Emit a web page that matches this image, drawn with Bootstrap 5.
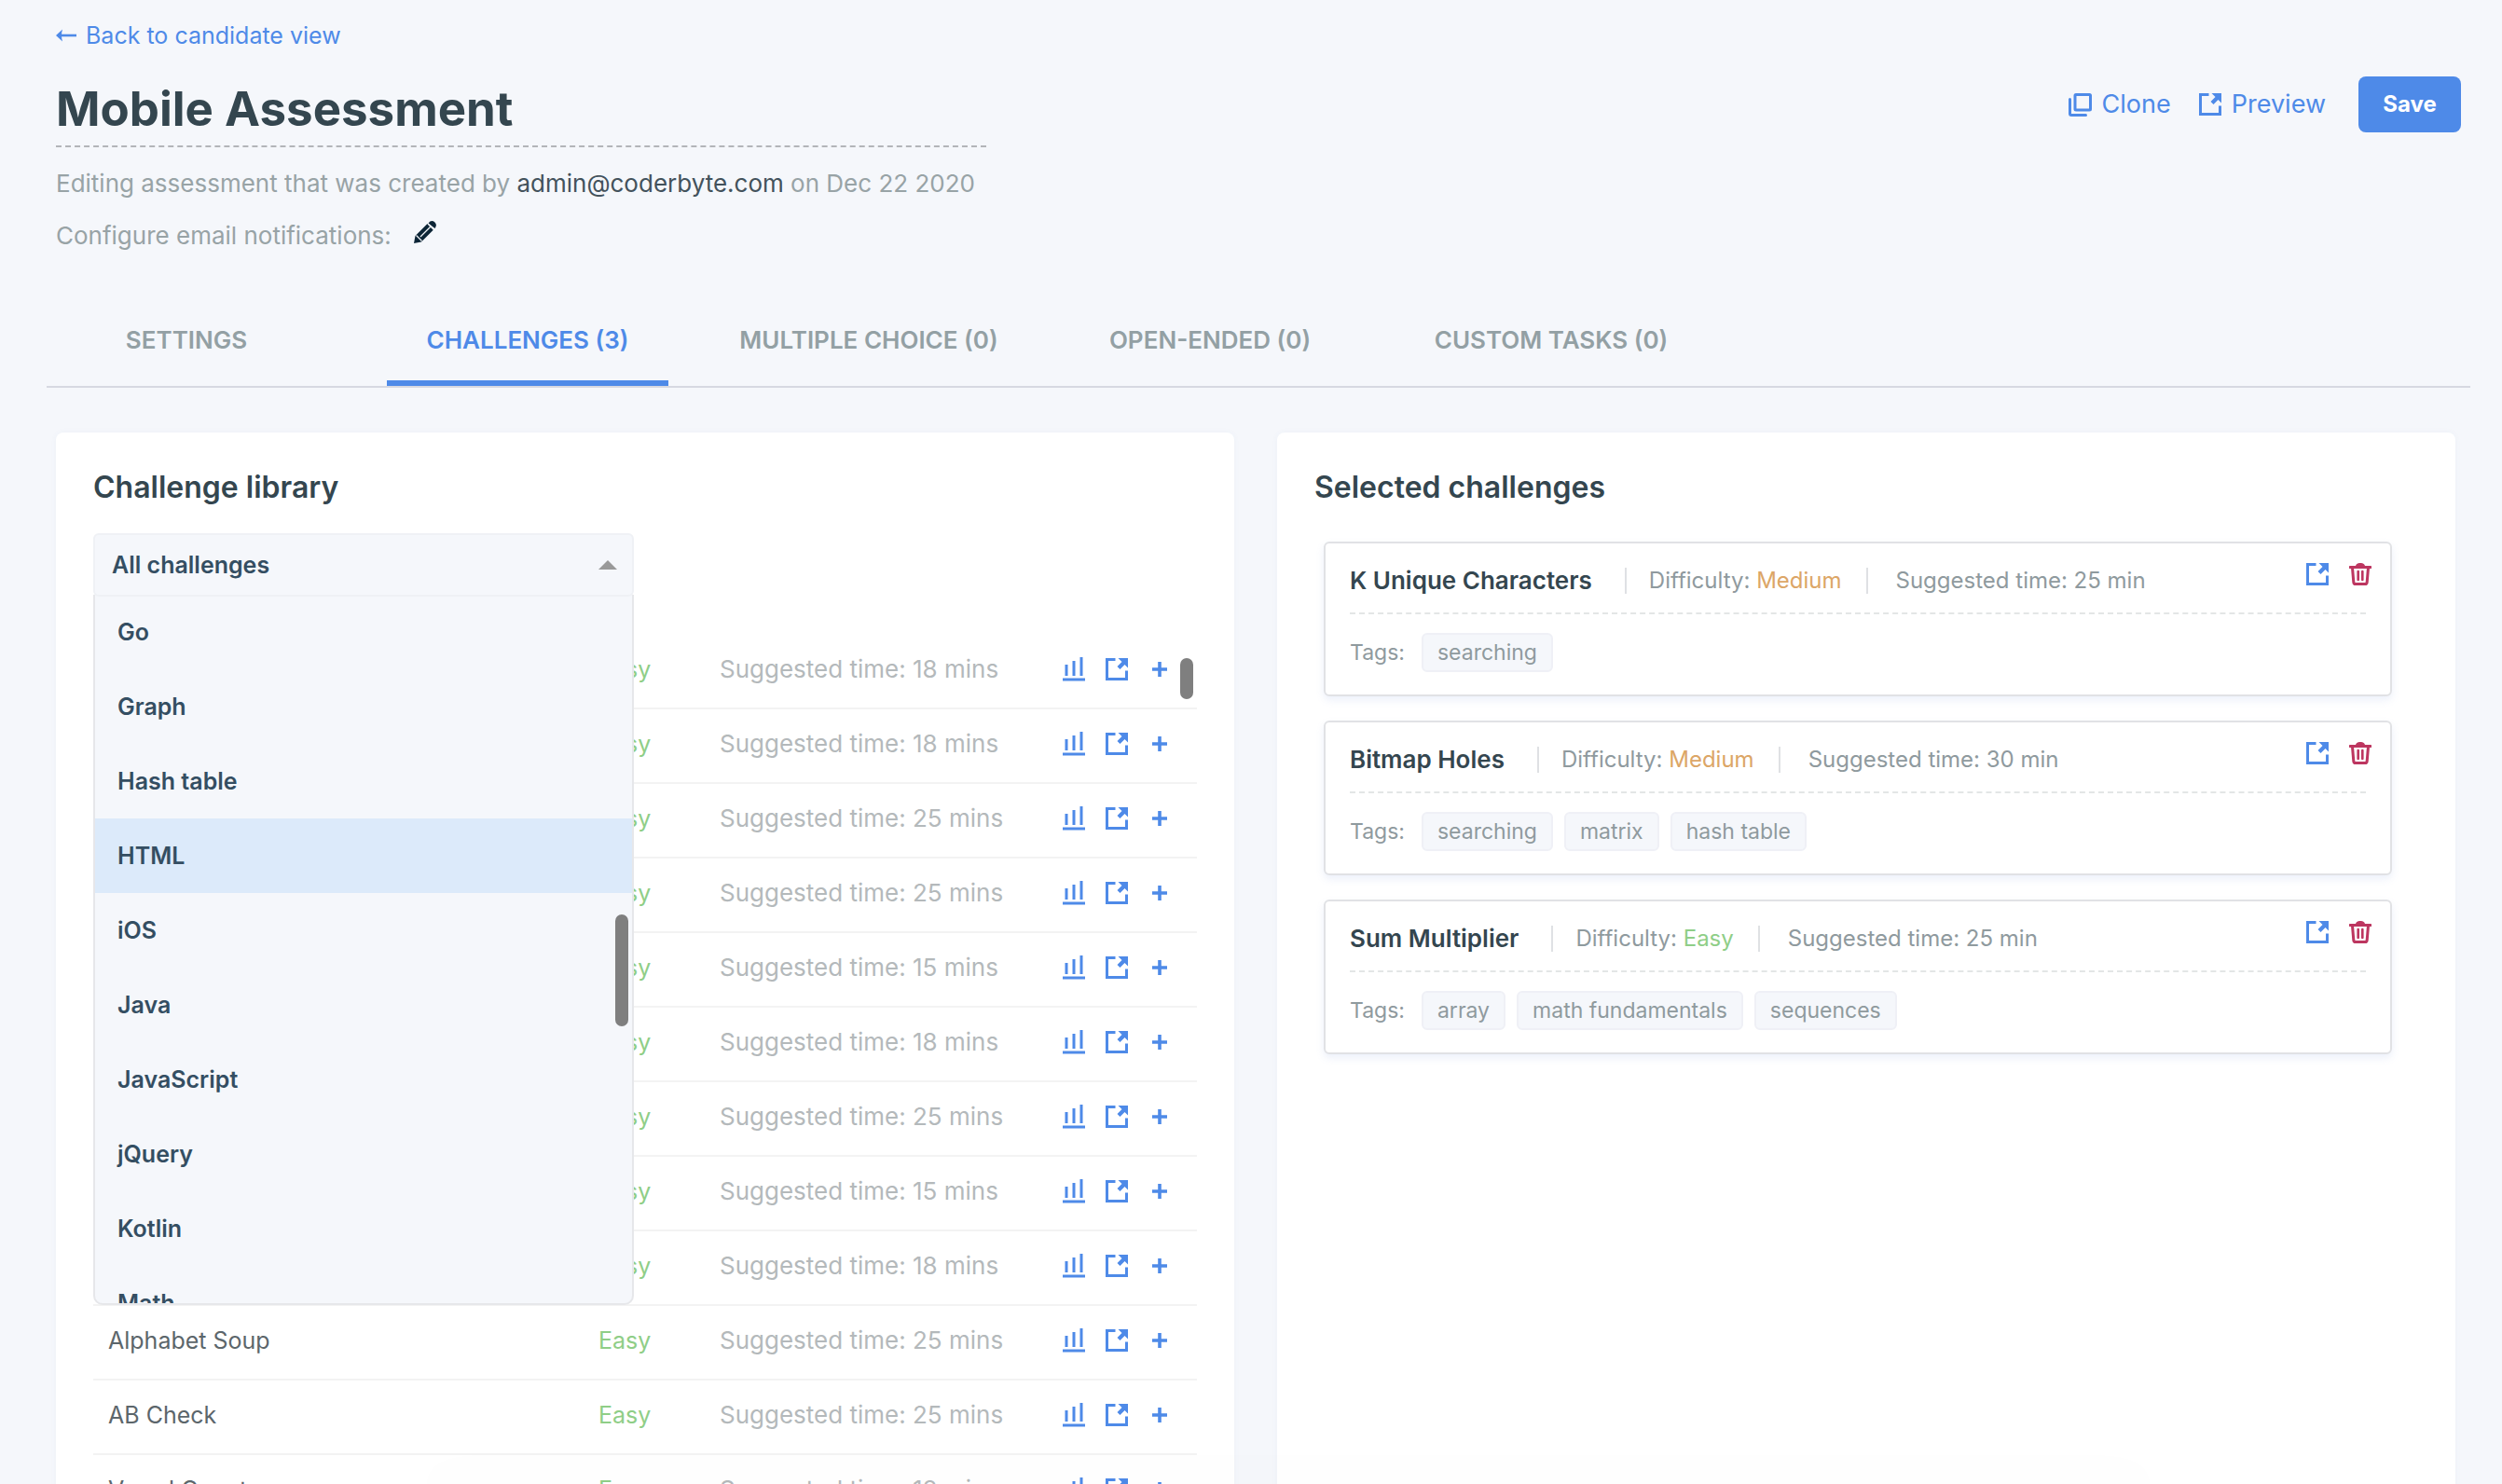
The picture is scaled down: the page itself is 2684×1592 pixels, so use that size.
<!DOCTYPE html>
<html lang="en">
<head>
<meta charset="utf-8">
<meta name="viewport" content="width=device-width, initial-scale=1">
<title>Mobile Assessment</title>
<link href="https://cdn.jsdelivr.net/npm/bootstrap@5.3.0/dist/css/bootstrap.min.css" rel="stylesheet">
<style>
:root{--blue:#4e8ae8;--ink:#34464f;--muted:#98a3a6}
body{font-family:Inter,"Liberation Sans",sans-serif;font-size:26px;line-height:38px;background:#f5f7fb;color:var(--muted);height:100vh;overflow:hidden}
a{color:var(--blue);text-decoration:none}
svg{display:block;flex:none}
.icon-btn{border:0;background:none;padding:0;color:var(--blue)}
.page-head{padding:19px 44px 0 60px}
.back-link{font-size:25px;gap:10px}
.head-row{margin-top:23px}
.title-input{width:998px;max-width:100%;height:78px;border:0;border-bottom:2px dashed #b3b5b9;background:none;padding:0 0 4px;font-size:51px;font-weight:700;color:var(--ink);outline:0}
.meta-line{margin:20px 0 18px}
.meta-line strong{font-weight:400;color:#43525c}
.head-actions{font-size:27px;gap:30px;margin-top:2px}
.head-actions a{gap:11px}
.save-btn{width:110px;height:60px;border-radius:8px;background:var(--blue);color:#fff;font-size:24px;font-weight:700;margin-left:5px;padding:0}
.tab-bar{margin:50px 34px 0 50px;border-bottom:2px solid #d6d8e1}
.tab-bar .nav-item{width:366px}
.tab-bar .nav-item:first-child{width:300px;margin-right:33px}
.tab-bar .nav-link{min-width:302px;height:92px;border-bottom:6px solid transparent;border-radius:0;padding:0;font-weight:600;line-height:86px;color:#93a0a4;text-align:center;white-space:nowrap}
.tab-bar .nav-link.active{color:var(--blue);border-color:var(--blue)}
.panels{padding:48px 50px 0 60px;gap:46px}
.panel{flex:1 1 0;min-width:0;background:#fff;border-radius:8px;padding:39px 40px 0;box-shadow:0 0 6px rgba(80,110,170,.05)}
.panel h2{font-size:32px;line-height:40px;font-weight:600;color:var(--ink);margin:0 0 29px}
.picker{width:580px;height:68px;margin-bottom:40px}
.picker-btn{position:relative;z-index:1001;width:100%;height:68px;border:2px solid #eff1f5;border-radius:6px;background:#f5f7fb;color:#344e62;font-size:25px;font-weight:600;padding:0 16px 0 18px}
.picker-menu{top:66px;width:100%;height:762px;margin:0;padding:0;overflow:hidden;background:#f5f7fb;border:2px solid #e6e7ea;border-top:0;border-radius:0 0 10px 10px}
.picker-menu .dropdown-item{height:80px;padding:0 24px;font-size:25px;font-weight:600;color:#344e62}
.picker-menu .dropdown-item.active{background:#dceafa}
.thumb{position:absolute;width:14px;border-radius:7px;background:#7f7f7f}
.picker-menu .thumb{right:4px;top:343px;height:120px}
.library .thumb{right:4px;top:26px;height:44px}
.library table{table-layout:fixed;width:100%}
.library td{height:80px;padding:0 0 4px;border-bottom:2px solid #f3f3f3;vertical-align:middle;font-size:25px;white-space:nowrap}
.library td:first-child{padding-left:16px;color:#5c666b}
.library td:nth-child(3){font-size:26px;color:#b4b9bb}
.library td.easy,.easy{color:#8fce87}
.medium{color:#dca667}
.row-icons{gap:22px}
.row-icons .plus{margin-left:4px}
.picked{margin:38px 28px 0 10px;gap:26px}
.pick{border:2px solid #e1e2e5;border-radius:6px;background:#fff;padding:0 26px 24px;box-shadow:0 4px 8px rgba(120,150,220,.14)}
.pick-top{height:76px;padding-top:6px;border-bottom:2px dashed #e3e6e6;font-size:24px;color:#8f9a9e}
.pick h3{font-size:26px;font-weight:600;color:var(--ink);margin:0 35px 0 0}
.pick-diff{border:solid #dfe1e4;border-width:0 2px;padding:0 26px 0 24px;line-height:28px}
.pick-time{margin-left:30px}
.pick-icons{gap:22px;margin:0 -6px 14px auto}
.trash{color:#bd3660}
.pick-tags{gap:12px;margin-top:20px;font-size:23px;color:#8f9a9e}
.pick-tags b{font-weight:400;margin-right:6px}
.tag{height:42px;line-height:38px;border:2px solid #eff0f6;border-radius:6px;background:#f5f7fb;padding:0 15px}
.foot-shade{position:fixed;bottom:0;left:17%;right:14%;height:0;box-shadow:0 0 60px 6px rgba(0,0,0,.04)}
</style>
</head>
<body class="d-flex flex-column">
<svg width="0" height="0" class="position-absolute" aria-hidden="true">
  <symbol id="open" viewBox="0 0 24 24"><path d="M10.500 1.500H1.500v21h21V13.500" fill="none" stroke="currentColor" stroke-width="3"/><path d="M13.500 0H24v10.500l-3.500-3.500-5 5-3-3 5-5z" fill="currentColor"/></symbol>
  <symbol id="chart" viewBox="0 0 24 26"><path d="M4 8v12M12 4v16M20 0v20M0 24h24" fill="none" stroke="currentColor" stroke-width="3"/></symbol>
  <symbol id="plus" viewBox="0 0 16 16"><path d="M8 0v16M0 8h16" stroke="currentColor" stroke-width="3.600"/></symbol>
  <symbol id="bin" viewBox="0 0 24 24"><path d="M1 4.500h22" stroke="currentColor" stroke-width="3" stroke-linecap="round"/><path d="M7 4c0-3 2-4 5-4s5 1 5 4z" fill="currentColor"/><path d="M3.500 5l1.300 15.500q.2 2 2 2h10.400q1.800 0 2-2L20.500 5" fill="none" stroke="currentColor" stroke-width="3"/><path d="M9.700 9v9M14.300 9v9" stroke="currentColor" stroke-width="2.600" stroke-linecap="round"/></symbol>
</svg>

<header class="page-head">
  <div class="d-flex"><a href="#" class="back-link d-flex align-items-center"><svg width="22" height="14" viewBox="0 0 22 14" aria-hidden="true"><path d="M4 7h18" stroke="currentColor" stroke-width="2.600"/><path d="M0 7l7-6.500q-2 6.500 0 13z" fill="currentColor"/></svg>Back to candidate view</a></div>
  <div class="head-row d-flex justify-content-between align-items-start">
    <input class="title-input" type="text" value="Mobile Assessment" aria-label="Assessment title">
    <div class="head-actions d-flex align-items-center">
      <a href="#" class="d-flex align-items-center"><svg width="25" height="25" viewBox="0 0 25 25" fill="none" stroke="currentColor" stroke-width="3" aria-hidden="true"><rect x="7" y="1.500" width="16.500" height="16.500" rx="1"/><path d="M1.500 6.500V22q0 1.500 1.500 1.500h15.500" stroke-linecap="round"/></svg>Clone</a>
      <a href="#" class="d-flex align-items-center"><svg width="24" height="24" aria-hidden="true"><use href="#open"/></svg>Preview</a>
      <button type="button" class="btn save-btn">Save</button>
    </div>
  </div>
  <p class="meta-line">Editing assessment that was created by <strong>admin@coderbyte.com</strong> on Dec 22 2020</p>
  <div class="d-flex align-items-center">Configure email notifications:
    <button type="button" class="icon-btn ms-4 mb-2" aria-label="Edit email notifications"><svg width="24" height="24" viewBox="0 0 24 24"><path d="M0 24l1.500-8L14.500 3l6.500 6.500L8 22.500z" fill="#0c2536"/><path d="M15.500 2.500q3-4 6.500-1.500 3.500 3 .5 7z" fill="#0c2536"/><path d="M2.500 15.500l6 6M15 3l6.500 6.500M7 17L17.500 6.500" stroke="#f5f7fb" stroke-width="1.300"/></svg></button>
  </div>
</header>

<nav class="tab-bar">
  <ul class="nav flex-nowrap">
    <li class="nav-item d-flex justify-content-center"><a class="nav-link" href="#">SETTINGS</a></li>
    <li class="nav-item d-flex justify-content-center"><a class="nav-link active" aria-current="page" href="#">CHALLENGES (3)</a></li>
    <li class="nav-item d-flex justify-content-center"><a class="nav-link" href="#">MULTIPLE CHOICE (0)</a></li>
    <li class="nav-item d-flex justify-content-center"><a class="nav-link" href="#">OPEN-ENDED (0)</a></li>
    <li class="nav-item d-flex justify-content-center"><a class="nav-link" href="#">CUSTOM TASKS (0)</a></li>
  </ul>
</nav>

<main class="panels d-flex flex-grow-1">
  <section class="panel">
    <h2>Challenge library</h2>
    <div class="picker dropdown">
      <button type="button" class="picker-btn d-flex align-items-center justify-content-between" aria-expanded="true">All challenges<svg width="20" height="10" viewBox="0 0 20 10" aria-hidden="true"><path d="M0 10L10 0l10 10z" fill="#999"/></svg></button>
      <ul class="picker-menu dropdown-menu show">
        <li><button type="button" class="dropdown-item">Go</button></li>
        <li><button type="button" class="dropdown-item">Graph</button></li>
        <li><button type="button" class="dropdown-item">Hash table</button></li>
        <li><button type="button" class="dropdown-item active">HTML</button></li>
        <li><button type="button" class="dropdown-item">iOS</button></li>
        <li><button type="button" class="dropdown-item">Java</button></li>
        <li><button type="button" class="dropdown-item">JavaScript</button></li>
        <li><button type="button" class="dropdown-item">jQuery</button></li>
        <li><button type="button" class="dropdown-item">Kotlin</button></li>
        <li><button type="button" class="dropdown-item">Math</button></li>
        <li class="thumb" aria-hidden="true"></li>
      </ul>
    </div>
    <div class="library position-relative">
      <table>
        <colgroup><col><col style="width:130px"><col style="width:368px"><col style="width:144px"></colgroup>
        <tbody id="library-rows"></tbody>
      </table>
      <div class="thumb"></div>
    </div>
  </section>

  <section class="panel">
    <h2>Selected challenges</h2>
    <div class="picked d-flex flex-column">
      <article class="pick">
        <div class="pick-top d-flex align-items-center">
          <h3>K Unique Characters</h3>
          <div class="pick-diff">Difficulty: <span class="medium">Medium</span></div>
          <div class="pick-time">Suggested time: 25 min</div>
          <div class="pick-icons d-flex"><a href="#" aria-label="Open"><svg width="24" height="24"><use href="#open"/></svg></a><button type="button" class="icon-btn trash" aria-label="Remove"><svg width="24" height="24"><use href="#bin"/></svg></button></div>
        </div>
        <div class="pick-tags d-flex align-items-center"><b>Tags:</b><span class="tag">searching</span></div>
      </article>
      <article class="pick">
        <div class="pick-top d-flex align-items-center">
          <h3>Bitmap Holes</h3>
          <div class="pick-diff">Difficulty: <span class="medium">Medium</span></div>
          <div class="pick-time">Suggested time: 30 min</div>
          <div class="pick-icons d-flex"><a href="#" aria-label="Open"><svg width="24" height="24"><use href="#open"/></svg></a><button type="button" class="icon-btn trash" aria-label="Remove"><svg width="24" height="24"><use href="#bin"/></svg></button></div>
        </div>
        <div class="pick-tags d-flex align-items-center"><b>Tags:</b><span class="tag">searching</span><span class="tag">matrix</span><span class="tag">hash table</span></div>
      </article>
      <article class="pick">
        <div class="pick-top d-flex align-items-center">
          <h3>Sum Multiplier</h3>
          <div class="pick-diff">Difficulty: <span class="easy">Easy</span></div>
          <div class="pick-time">Suggested time: 25 min</div>
          <div class="pick-icons d-flex"><a href="#" aria-label="Open"><svg width="24" height="24"><use href="#open"/></svg></a><button type="button" class="icon-btn trash" aria-label="Remove"><svg width="24" height="24"><use href="#bin"/></svg></button></div>
        </div>
        <div class="pick-tags d-flex align-items-center"><b>Tags:</b><span class="tag">array</span><span class="tag">math fundamentals</span><span class="tag">sequences</span></div>
      </article>
    </div>
  </section>
</main>
<div class="foot-shade"></div>

<script src="https://cdn.jsdelivr.net/npm/bootstrap@5.3.0/dist/js/bootstrap.bundle.min.js"></script>
<script>
// Challenge name and suggested minutes, in list order
const challenges = [
  ["", 18], ["", 18], ["", 25], ["", 25], ["", 15], ["", 18], ["", 25], ["", 15], ["", 18],
  ["Alphabet Soup", 25], ["AB Check", 25], ["Vowel Count", 18]
];
document.getElementById("library-rows").innerHTML = challenges.map(([name, mins]) => `<tr>
  <td>${name}</td><td class="easy">Easy</td><td>Suggested time: ${mins} mins</td>
  <td><div class="row-icons d-flex align-items-center">
    <a href="#" aria-label="Statistics"><svg width="24" height="26"><use href="#chart"/></svg></a>
    <a href="#" aria-label="Open"><svg width="24" height="24"><use href="#open"/></svg></a>
    <button type="button" class="icon-btn plus" aria-label="Add"><svg width="16" height="16"><use href="#plus"/></svg></button>
  </div></td></tr>`).join("");
</script>
</body>
</html>
